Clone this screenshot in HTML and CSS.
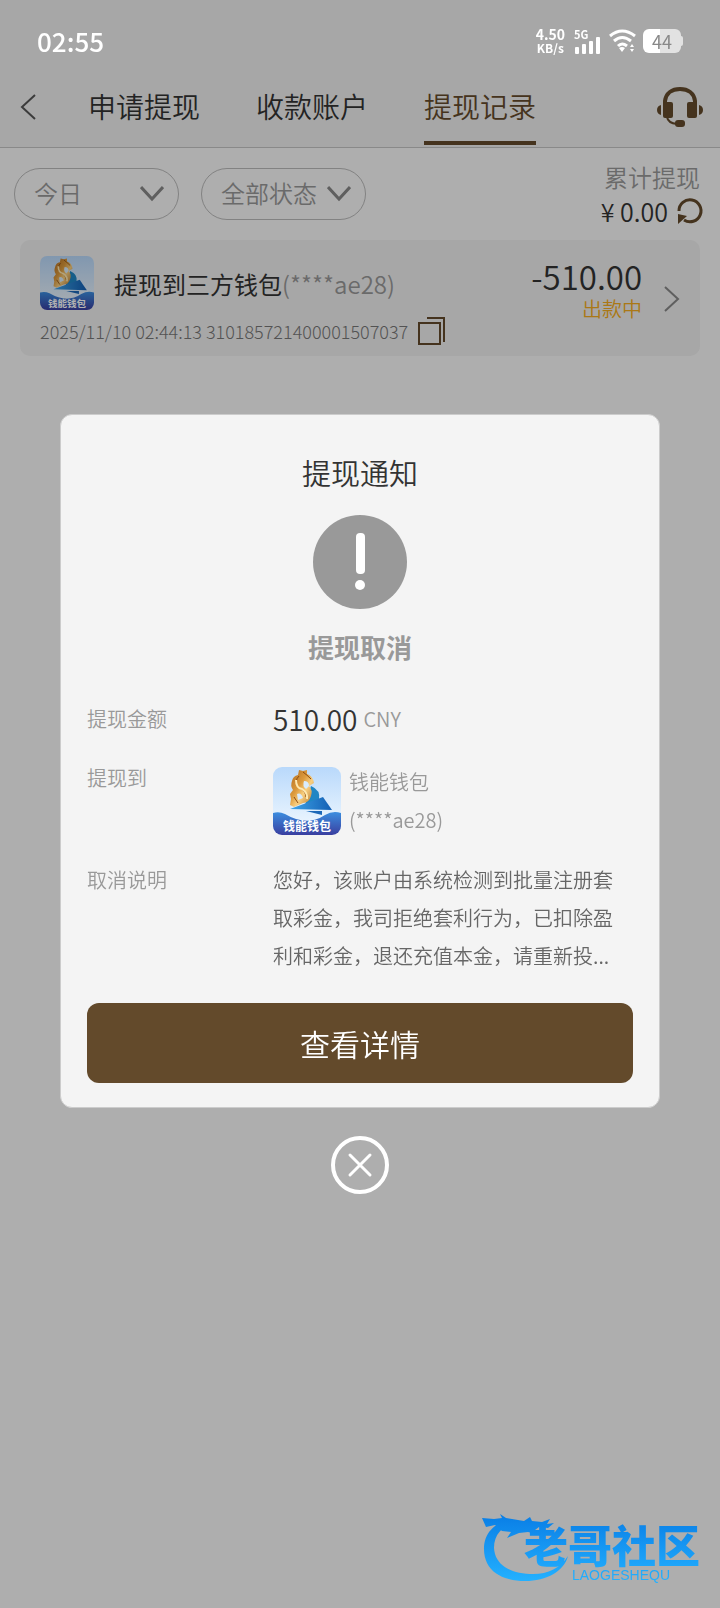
FILE: index.html
```
<!DOCTYPE html>
<html lang="zh-CN">
  <head>
    <meta charset="utf-8">
    <meta name="viewport" content="width=device-width, initial-scale=1">
    <title>提现记录</title>
    <link rel="stylesheet" href="styles.css">
  </head>
  <body>
    <!-- shared icons -->
    <svg class="defs" width="0" height="0" aria-hidden="true">
      <defs>
        <linearGradient id="sky" x1="0" y1="0" x2="0" y2="1">
          <stop offset="0" stop-color="#b9d9fb"/><stop offset="1" stop-color="#f4faff"/>
        </linearGradient>
        <linearGradient id="sea" x1="0" y1="0" x2="0" y2="1">
          <stop offset="0" stop-color="#3b8ee0"/><stop offset="1" stop-color="#3a3fa0"/>
        </linearGradient>
        <linearGradient id="gold" x1="0" y1="0" x2="1" y2="1">
          <stop offset="0" stop-color="#b06a20"/><stop offset=".4" stop-color="#dc9a3c"/><stop offset=".6" stop-color="#f8cf80"/><stop offset="1" stop-color="#a8641c"/>
        </linearGradient>
        <linearGradient id="boat" x1="0" y1="0" x2="1" y2="0">
          <stop offset="0" stop-color="#3fa5e8"/><stop offset="1" stop-color="#135fb4"/>
        </linearGradient>
        <clipPath id="round"><rect width="68" height="68" rx="9"/></clipPath>
      </defs>
      <symbol id="wallet" viewBox="0 0 68 68">
        <g clip-path="url(#round)">
          <rect width="68" height="68" fill="url(#sky)"/>
          <path d="M38 19q10 4 8 14l-14 5z" fill="#1f86c4"/>
          <path d="M25 8l1-5 4 1 4-1 0 4q6 2 7 9l-5 3q4 4 2 10-2 7-8 7l-9 4-4-2 1-6-1-5 3-4q-3-4-1-9 1-5 6-6z" fill="url(#gold)"/>
          <path d="M31 14q5 0 5 5l-3 3q-4-3-2-8z" fill="#d9ecfd"/>
          <path d="M24 27q4-2 6 4l-5 2z" fill="#d9ecfd"/>
          <path d="M26 9q-5 5-1 11 8 4 8 10M30 5q4 3 8 7M21 30l4 6" fill="none" stroke="#8a4a12" stroke-width="1"/>
          <path d="M23 13q0 8 6 9 6 4 5 10" fill="none" stroke="#ffe9b0" stroke-width="2"/>
          <path d="M17 42L50 30l9 13z" fill="url(#boat)"/>
          <path d="M33 44h16v4z" fill="#1c68b8"/>
          <path d="M0 46q6-2 12 1 22 13 40 1 8-5 16-2v22H0z" fill="url(#sea)"/>
        </g>
      </symbol>
    </svg>

    <header class="top">
      <div class="status">
        <time class="clock">02:55</time>
        <div class="signals">
          <div class="speed"><b>4.50</b><small>KB/s</small></div>
          <svg width="28" height="26" viewBox="0 0 28 26" fill="#fff">
            <text class="net" x="0" y="11">5G</text>
            <rect x="1" y="19" width="4" height="7" rx="1"/><rect x="8" y="16" width="4" height="10" rx="1"/><rect x="15" y="13" width="4" height="13" rx="1"/><rect x="22" y="9" width="4" height="17" rx="1"/>
          </svg>
          <svg width="27" height="24" viewBox="0 0 27 24" fill="none" stroke="#fff" stroke-width="3">
            <path d="M1 7q12-10 25 0M5 12q8-7 17 0M9 17q4-4 9 0"/>
            <path d="M10 19q3-2 6 0l-3 4zM21 18l2-3 2 3zM21 20l2 3 2-3z" fill="#fff" stroke="none"/>
          </svg>
          <div class="battery"><span>44</span></div>
        </div>
      </div>
      <nav class="nav">
        <button class="back" aria-label="返回">
          <svg width="16" height="26" viewBox="0 0 16 26" fill="none" stroke="#555" stroke-width="2"><path d="M15 1L2 13l13 12"/></svg>
        </button>
        <div class="tabs">
          <a href="#apply">申请提现</a>
          <a href="#account">收款账户</a>
          <a href="#record" class="active">提现记录</a>
        </div>
        <button class="service" aria-label="客服">
          <svg width="46" height="40" viewBox="0 0 46 40" fill="#634a2b">
            <path d="M8 17V14C9 6 15 2 23 2s14 4 15 12v3" fill="none" stroke="#634a2b" stroke-width="4"/>
            <rect x="6" y="15" width="10" height="16" rx="2"/><rect x="30" y="15" width="10" height="16" rx="2"/>
            <path d="M4 18v10q-4-1-4-5t4-5zM42 18v10q4-1 4-5t-4-5z"/>
            <path d="M10 30q1 6 10 7" fill="none" stroke="#634a2b" stroke-width="2"/>
            <rect x="18" y="33" width="10" height="7" rx="3"/>
          </svg>
        </button>
      </nav>
    </header>

    <main>
      <section class="filters">
        <label class="pill">
          <select aria-label="日期"><option>今日</option></select>
          <svg width="24" height="16" viewBox="0 0 24 16"><path d="M1 1l11 12L23 1"/></svg>
        </label>
        <label class="pill">
          <select aria-label="状态"><option>全部状态</option></select>
          <svg width="24" height="16" viewBox="0 0 24 16"><path d="M1 1l11 12L23 1"/></svg>
        </label>
        <div class="total">
          <span>累计提现</span>
          <div class="total-sum">
            <b>¥ 0.00</b>
            <button aria-label="刷新">
              <svg width="28" height="28" viewBox="0 0 28 28" fill="none" stroke="#634a2b" stroke-width="3"><path d="M3 14A11 11 0 1 1 8 23"/><path d="M2 17l9 2-9 8z" fill="#634a2b" stroke="none"/></svg>
            </button>
          </div>
        </div>
      </section>

      <article class="record">
        <div class="record-main">
          <div class="record-title">
            <svg class="logo-small" viewBox="0 0 68 68"><use href="#wallet"/><text class="wallet-text" x="34" y="64" text-anchor="middle">钱能钱包</text></svg>
            <h2>提现到三方钱包<span>(****ae28)</span></h2>
          </div>
          <div class="record-meta">
            <span>2025/11/10 02:44:13 310185721400001507037</span>
            <button aria-label="复制">
              <svg width="28" height="30" viewBox="0 0 28 30" fill="none" stroke="#634a2b" stroke-width="2"><path d="M1 7h21v21H1zM9 2h17v24"/></svg>
            </button>
          </div>
        </div>
        <div class="record-side">
          <strong>-510.00</strong>
          <em>出款中</em>
        </div>
        <svg class="arrow" width="16" height="26" viewBox="0 0 16 26" fill="none" stroke="#888" stroke-width="2"><path d="M1 1l13 12L1 25"/></svg>
      </article>
    </main>

    <div class="mask">
      <div class="dialog" role="dialog" aria-labelledby="dialog-title">
        <h1 id="dialog-title">提现通知</h1>
        <svg class="warn" width="94" height="94" viewBox="0 0 94 94">
          <circle cx="47" cy="47" r="47" fill="#999"/>
          <rect x="43" y="18" width="9" height="41" rx="4" fill="#fff"/>
          <circle cx="47" cy="70" r="5" fill="#fff"/>
        </svg>
        <p class="state">提现取消</p>
        <dl class="detail">
          <dt class="money-label">提现金额</dt>
          <dd class="money"><b>510.00</b><span>CNY</span></dd>
          <dt>提现到</dt>
          <dd class="to">
            <svg class="logo" viewBox="0 0 68 68"><use href="#wallet"/><text class="wallet-text" x="34" y="64" text-anchor="middle">钱能钱包</text></svg>
            <div>钱能钱包<br>(****ae28)</div>
          </dd>
          <dt>取消说明</dt>
          <dd class="reason">您好，该账户由系统检测到批量注册套取彩金，我司拒绝套利行为，已扣除盈利和彩金，退还充值本金，请重新投...</dd>
        </dl>
        <button class="more">查看详情</button>
      </div>
      <button class="close" aria-label="关闭">
        <svg width="58" height="58" viewBox="0 0 58 58" fill="none" stroke="#fff"><circle cx="29" cy="29" r="27" stroke-width="4"/><path d="M19 19l20 20M39 19L19 39" stroke-width="3" stroke-linecap="round"/></svg>
      </button>
    </div>

    <svg class="mark" width="228" height="76" viewBox="0 0 228 76">
      <defs>
        <linearGradient id="blue" gradientUnits="userSpaceOnUse" x1="0" y1="6" x2="0" y2="70">
          <stop offset="0" stop-color="#0a7fe6"/><stop offset="1" stop-color="#23b0ff"/>
        </linearGradient>
      </defs>
      <g fill="url(#blue)">
        <path d="M30 9C11 13 2 24 2 39c0 22 18 32 41 32 22 0 39-10 43-25-8 13-22 19-38 18C28 63 13 55 12 38 12 25 20 16 33 12z"/>
        <path d="M0 8l12 1 8-1-2-4 6 4 12 2 6 1 6-4 2 4 10 1 8-3-3 5 7-1-6 5-9-1-4 3 7 2-1 3-13-3-9 1-12 5 4-6-9-1-7-6-9 2z"/>
        <text class="mark-name" x="42" y="53">老哥社区</text>
        <text class="mark-sub" x="90" y="70">LAOGESHEQU</text>
      </g>
    </svg>
  </body>
</html>
```
FILE: styles.css
```
* {
	box-sizing: border-box;
}
body {
	margin: 0;
	min-height: 100vh;
	background: #f9f9f9;
	color: #333;
	font-family: "Noto Sans CJK SC", "Noto Sans", sans-serif;
	font-weight: 350;
	font-size: 20px;
}
h1, h2, p, dl, dd {
	margin: 0;
	font-weight: inherit;
}
b, strong {
	font-weight: inherit;
}
em {
	font-style: normal;
}
button {
	padding: 0;
	border: 0;
	background: none;
	font: inherit;
	cursor: pointer;
}
svg {
	display: block;
	flex: none;
}
.defs {
	position: absolute;
}

/* top */
.top {
	background: #efefef;
	border-bottom: 1px solid #c4c4c4;
}
.status {
	position: relative;
	z-index: 2;
	display: flex;
	justify-content: space-between;
	align-items: center;
	height: 72px;
	padding: 10px 39px 0 37px;
	color: #fff;
}
.clock {
	padding-bottom: 2px;
	font-size: 26px;
	font-weight: 500;
}
.signals {
	display: flex;
	align-items: center;
	gap: 7px;
}
.speed {
	display: flex;
	flex-direction: column;
	align-items: center;
	margin-right: 2px;
	font-weight: 700;
	font-size: 14px;
	line-height: 13px;
}
.speed small {
	font-size: 12px;
}
.net {
	font-size: 11px;
	font-weight: 700;
}
.battery {
	position: relative;
	width: 38px;
	height: 24px;
	border-radius: 6px;
	background: linear-gradient(90deg, #fff 44%, #e2e2e2 44%);
	color: #888;
	font-size: 18px;
	font-weight: 400;
	line-height: 24px;
	text-align: center;
}
.battery::after {
	content: "";
	position: absolute;
	top: 7px;
	right: -2px;
	width: 2px;
	height: 10px;
	border-radius: 0 2px 2px 0;
	background: #e2e2e2;
}
.nav {
	display: flex;
	align-items: center;
	height: 75px;
	padding: 0 17px 0 20px;
}
.back,
.service {
	margin-bottom: 6px;
}
.back {
	width: 68px;
}
.tabs {
	display: flex;
	flex: 1;
	gap: 56px;
	height: 100%;
}
.tabs a {
	display: flex;
	align-items: center;
	padding-bottom: 8px;
	color: #333;
	font-size: 28px;
	text-decoration: none;
}
.tabs .active {
	margin-bottom: 2px;
	padding-bottom: 6px;
	box-shadow: inset 0 -4px #634a2b;
	color: #634a2b;
}

/* filters */
.filters {
	display: flex;
	align-items: center;
	gap: 22px;
	padding: 12px 16px 12px 14px;
}
.pill {
	display: grid;
	align-items: center;
	width: 165px;
}
.pill select,
.pill svg {
	grid-area: 1 / 1;
}
.pill select {
	width: 100%;
	height: 52px;
	padding: 0 44px 4px 19px;
	border: 1px solid #bbb;
	border-radius: 26px;
	background: none;
	color: #999;
	font: inherit;
	font-size: 24px;
	appearance: none;
}
.pill svg {
	justify-self: end;
	margin-right: 15px;
	fill: none;
	stroke: #888;
	stroke-width: 3;
	pointer-events: none;
}
.total {
	display: flex;
	flex-direction: column;
	align-items: flex-end;
	margin-left: auto;
	color: #999;
	font-size: 24px;
	line-height: 34px;
}
.total > span {
	padding-right: 4px;
}
.total-sum {
	display: flex;
	align-items: center;
	gap: 8px;
	color: #333;
	font-size: 25px;
}

/* record */
.record {
	display: flex;
	align-items: center;
	margin: 0 20px;
	padding: 16px 20px 10px;
	border-radius: 10px;
	background: #efefef;
}
.record-title {
	display: flex;
	align-items: center;
	gap: 20px;
}
.logo-small {
	width: 54px;
	height: 54px;
}
.record h2 {
	font-size: 24px;
	font-weight: 400;
	white-space: nowrap;
}
.record h2 span {
	color: #999;
	font-weight: 350;
}
.record-meta {
	display: flex;
	align-items: center;
	gap: 10px;
	margin-top: 6px;
	color: #777;
	font-size: 18px;
	font-weight: 300;
	line-height: 30px;
	white-space: nowrap;
}
.record-side {
	display: flex;
	flex: 1;
	flex-direction: column;
	align-items: flex-end;
	padding-bottom: 22px;
}
.record-side strong {
	font-size: 33px;
	line-height: 38px;
}
.record-side em {
	color: #f5ac20;
	font-size: 20px;
	line-height: 28px;
}
.arrow {
	margin: 0 0 4px 22px;
}

/* dialog */
.mask {
	position: fixed;
	inset: 0;
	z-index: 1;
	display: flex;
	flex-direction: column;
	align-items: center;
	justify-content: center;
	gap: 28px;
	padding: 0 60px;
	background: rgba(0, 0, 0, .3);
}
.dialog {
	display: flex;
	flex-direction: column;
	width: 100%;
	padding: 36px 26px 24px;
	border: 1px solid #ccc;
	border-radius: 12px;
	background: #f4f4f4;
}
.dialog h1 {
	font-size: 29px;
	line-height: 42px;
	text-align: center;
}
.warn {
	margin: 22px auto 18px;
}
.state {
	color: #999;
	font-size: 26px;
	font-weight: 700;
	line-height: 40px;
	text-align: center;
}
.detail {
	display: grid;
	grid-template-columns: 186px 1fr;
	row-gap: 20px;
	margin: 32px 0 28px;
	color: #999;
	line-height: 38px;
}
.money-label,
.money {
	line-height: 40px;
}
.money {
	display: flex;
	gap: 6px;
}
.money b {
	color: #333;
	font-size: 28px;
}
.to {
	display: flex;
	align-items: center;
	gap: 8px;
	padding: 4px 0 2px;
}
.logo {
	width: 68px;
	height: 68px;
}
.wallet-text {
	fill: #fff;
	font-size: 12px;
	font-weight: 700;
}
.reason {
	padding-right: 18px;
	color: #666;
}
.more {
	height: 80px;
	border-radius: 12px;
	background: #634a2b;
	color: #fff;
	font-size: 30px;
}

/* watermark */
.mark {
	position: fixed;
	right: 10px;
	bottom: 22px;
	z-index: 3;
}
.mark-name {
	font-size: 44px;
	font-weight: 900;
}
.mark-sub {
	font-family: "Liberation Sans", sans-serif;
	font-size: 14px;
}
```
